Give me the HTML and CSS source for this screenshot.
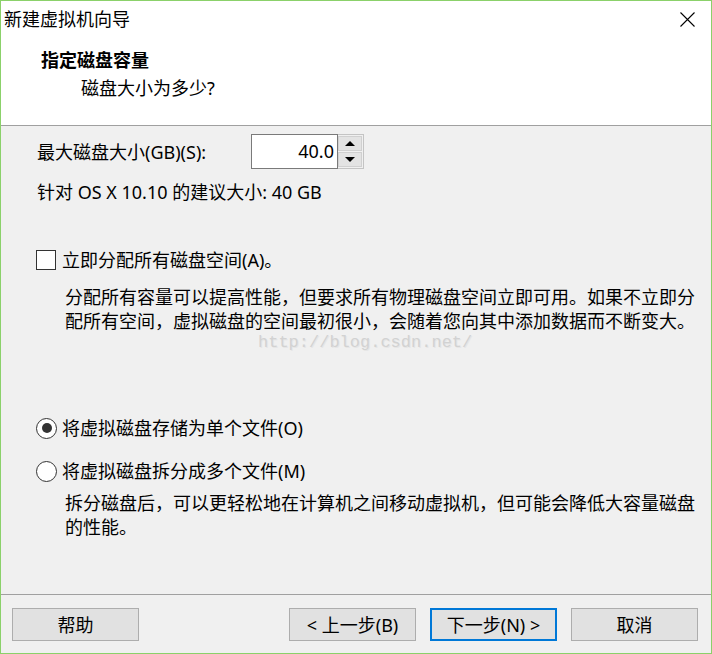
FILE: index.html
```html
<!DOCTYPE html>
<html lang="zh-CN">
<head>
<meta charset="utf-8">
<title>新建虚拟机向导</title>
<link rel="stylesheet" href="styles.css">
</head>
<body>
<div class="window">
  <div class="titlebar">
    <span class="title">新建虚拟机向导</span>
    <svg class="close" width="15" height="15" viewBox="0 0 15 15"><path d="M0.5 0.5 L14.5 14.5 M14.5 0.5 L0.5 14.5" stroke="#000" stroke-width="1.1" fill="none"/></svg>
  </div>
  <div class="header">
    <div class="h-title">指定磁盘容量</div>
    <div class="h-sub">磁盘大小为多少?</div>
  </div>
  <div class="content">
    <div class="size-row">
      <span class="size-label">最大磁盘大小(GB)(S):</span>
      <div class="spin">
        <div class="spin-input">40.0</div>
        <div class="spin-btns">
          <div class="spin-btn"><span class="tri-up"></span></div>
          <div class="spin-btn"><span class="tri-down"></span></div>
        </div>
      </div>
    </div>
    <div class="suggest">针对 OS X 10.10 的建议大小: 40 GB</div>
    <div class="opt check-row">
      <span class="checkbox"></span>
      <span class="opt-label">立即分配所有磁盘空间(A)。</span>
    </div>
    <div class="desc desc1">分配所有容量可以提高性能，但要求所有物理磁盘空间立即可用。如果不立即分<br>配所有空间，虚拟磁盘的空间最初很小，会随着您向其中添加数据而不断变大。</div>
    <div class="watermark">http://blog.csdn.net/</div>
    <div class="opt radio-row1">
      <span class="radio checked"></span>
      <span class="opt-label">将虚拟磁盘存储为单个文件(O)</span>
    </div>
    <div class="opt radio-row2">
      <span class="radio"></span>
      <span class="opt-label">将虚拟磁盘拆分成多个文件(M)</span>
    </div>
    <div class="desc desc2">拆分磁盘后，可以更轻松地在计算机之间移动虚拟机，但可能会降低大容量磁盘<br>的性能。</div>
  </div>
  <div class="footer">
    <button class="btn">帮助</button>
    <div class="footer-right">
      <button class="btn">&lt; 上一步(B)</button>
      <button class="btn default">下一步(N) &gt;</button>
      <button class="btn">取消</button>
    </div>
  </div>
</div>
</body>
</html>
```
FILE: styles.css
```css
* { box-sizing: border-box; }
html, body { margin: 0; padding: 0; }
body {
  font-family: "Noto Sans", "Noto Sans CJK SC", sans-serif;
  font-size: 18px;
  color: #000;
  background: #f0f0f0;
}
.window {
  width: 712px;
  height: 654px;
  border: 1px solid #8bd16a;
  display: flex;
  flex-direction: column;
  background: #f0f0f0;
}
.titlebar {
  height: 35px;
  background: #fff;
  display: flex;
  align-items: center;
  justify-content: space-between;
  padding-left: 3px;
  padding-right: 16px;
}
.title { font-size: 18px; line-height: 24px; }
.close { display: block; margin-top: 1px; }
.header {
  height: 90px;
  background: #fff;
  border-bottom: 1px solid #a0a0a0;
  padding-top: 12px;
}
.h-title {
  font-weight: bold;
  margin-left: 40px;
  line-height: 24px;
  font-size: 18px;
}
.h-sub {
  margin-left: 80px;
  margin-top: 4px;
  line-height: 24px;
}
.content {
  flex: 1;
  position: relative;
  padding-left: 36px;
}
.size-row {
  display: flex;
  align-items: center;
  margin-top: 8px;
  height: 35px;
}
.size-label { width: 214px; line-height: 24px; }
.spin { display: flex; height: 35px; }
.spin-input {
  width: 87px;
  height: 35px;
  background: #fff;
  border: 1px solid #7a7a7a;
  text-align: right;
  padding-right: 3px;
  line-height: 32px;
}
.spin-btns {
  width: 26px;
  height: 35px;
  display: flex;
  flex-direction: column;
  border: 1px solid #c4c4c4;
  border-left: none;
  padding: 1px 1px 1px 0;
  gap: 1px;
  background: #f0f0f0;
}
.spin-btn {
  flex: 1;
  background: #e3e3e3;
  border: 1px solid #d0d0d0;
  display: flex;
  align-items: center;
  justify-content: center;
}
.tri-up {
  width: 0; height: 0;
  border-left: 5px solid transparent;
  border-right: 5px solid transparent;
  border-bottom: 5px solid #000;
}
.tri-down {
  width: 0; height: 0;
  border-left: 5px solid transparent;
  border-right: 5px solid transparent;
  border-top: 5px solid #000;
}
.suggest {
  margin-top: 11px;
  line-height: 24px;
}
.opt {
  display: flex;
  align-items: center;
  height: 24px;
}
.check-row { margin-top: 44px; }
.checkbox {
  width: 20px;
  height: 20px;
  background: #fff;
  border: 1px solid #333;
  margin-left: -1px;
}
.opt-label { margin-left: 6px; line-height: 24px; }
.desc {
  padding-left: 28px;
  line-height: 23.5px;
}
.desc1 { margin-top: 14px; }
.watermark {
  position: absolute;
  left: 257px;
  top: 208px;
  font-family: "Liberation Mono", monospace;
  font-size: 17px;
  color: #d2d2d2;
  text-shadow: 1px 1px 0 #e6e6e6;
  line-height: 17px;
}
.radio-row1 { margin-top: 83px; }
.radio-row2 { margin-top: 19px; }
.radio {
  width: 21px;
  height: 21px;
  border-radius: 50%;
  border: 1px solid #333;
  background: #fff;
  margin-left: -1px;
  display: flex;
  align-items: center;
  justify-content: center;
}
.radio.checked::after {
  content: "";
  width: 10px;
  height: 10px;
  border-radius: 50%;
  background: #333;
}
.radio + .opt-label { margin-left: 5px; }
.desc2 { margin-top: 9px; }
.footer {
  height: 59px;
  border-top: 1px solid #a0a0a0;
  display: flex;
  justify-content: space-between;
  align-items: flex-start;
  padding: 13px 13px 0 11px;
}
.footer-right { display: flex; gap: 14px; }
.btn {
  width: 127px;
  height: 33px;
  background: #e1e1e1;
  border: 1px solid #adadad;
  font-family: "Noto Sans", "Noto Sans CJK SC", sans-serif;
  font-size: 18px;
  color: #000;
  padding: 0;
  line-height: 30px;
}
.btn.default { border: 2px solid #0078d7; }
```
